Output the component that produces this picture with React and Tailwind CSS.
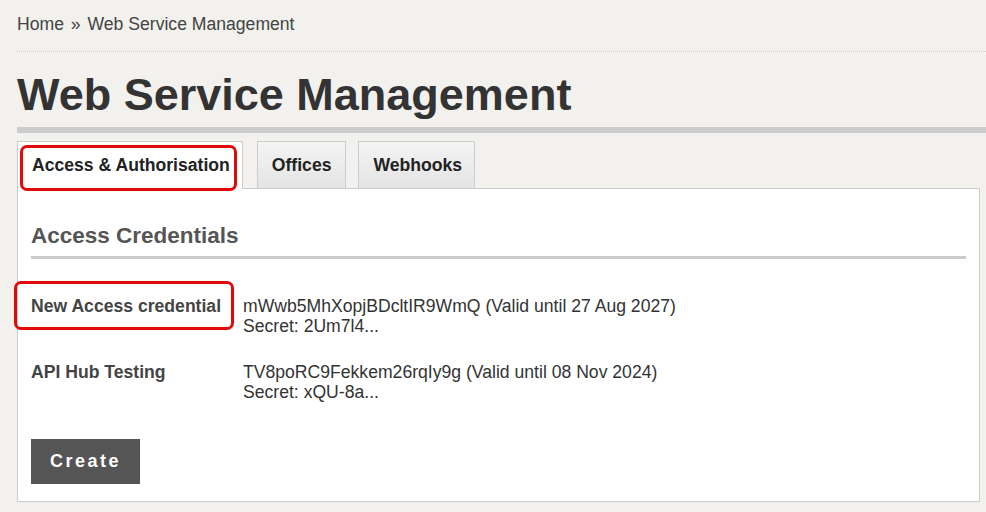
import React from 'react';

const credentials = [
    { name: 'New Access credential', key: 'mWwb5MhXopjBDcltIR9WmQ', valid: '27 Aug 2027', secret: '2Um7l4...', marked: true },
    { name: 'API Hub Testing', key: 'TV8poRC9Fekkem26rqIy9g', valid: '08 Nov 2024', secret: 'xQU-8a...', marked: false },
];

const App = () => {
    return (
        <div className="min-h-screen overflow-hidden bg-[#f2f1ed] pl-[17px] font-['Liberation_Sans',Arial,sans-serif] text-[17.6px] text-[#333]">
            {/* Breadcrumb */}
            <div className="pt-[14px] pb-[17px] leading-[20px] text-[#444] border-b border-dotted border-[#c8c8c8]">
                Home <span className="mx-[2px]">»</span> Web Service Management
            </div>

            {/* Page title */}
            <h1 className="mt-[20px] pb-[10px] text-[45px] font-bold leading-[45px] text-[#333] border-b-[6px] border-[#cccccc]">
                Web Service Management
            </h1>

            {/* Tabs */}
            <div className="mt-[8px] flex items-start font-bold text-[#222]">
                <div className="relative z-10 -mb-px flex h-[48px] items-center border border-b-0 border-[#cccccc] bg-white pl-[14px] pr-[12px]">
                    Access &amp; Authorisation
                    <div className="absolute left-[2px] top-[3px] h-[46px] w-[217px] rounded-[7px] border-[3px] border-[#e10a0a]"></div>
                </div>
                <div className="ml-[14px] flex h-[47px] items-center border border-b-0 border-[#cccccc] bg-linear-to-b from-[#f4f4f4] to-[#e4e4e4] px-[14px]">
                    Offices
                </div>
                <div className="ml-[12px] flex h-[47px] items-center border border-b-0 border-[#cccccc] bg-linear-to-b from-[#f4f4f4] to-[#e4e4e4] pl-[14px] pr-[12px]">
                    Webhooks
                </div>
            </div>

            {/* Panel */}
            <div className="mr-[6px] border border-[#cccccc] bg-white px-[13px] pt-[34px] pb-[17px]">
                <h2 className="pb-[7px] text-[22.5px] font-bold leading-[26px] text-[#555] border-b-[3px] border-[#cccccc]">
                    Access Credentials
                </h2>

                <div className="mt-[37px] flex flex-col gap-[26px]">
                    {credentials.map((c) => (
                        <div key={c.key} className="flex leading-[20px]">
                            <div className="relative w-[212px] shrink-0 font-bold text-[#444]">
                                {c.name}
                                {c.marked && (
                                    <div className="absolute -left-[17px] -top-[15px] h-[49px] w-[220px] rounded-[7px] border-[3px] border-[#e10a0a]"></div>
                                )}
                            </div>
                            <div className="text-[#333]">
                                <div>{c.key} (Valid until {c.valid})</div>
                                <div>Secret: {c.secret}</div>
                            </div>
                        </div>
                    ))}
                </div>

                <button className="mt-[37px] h-[45px] w-[109px] bg-[#555555] text-[18px] font-bold tracking-[2.5px] text-white">
                    Create
                </button>
            </div>
        </div>
    );
};

export default App;
